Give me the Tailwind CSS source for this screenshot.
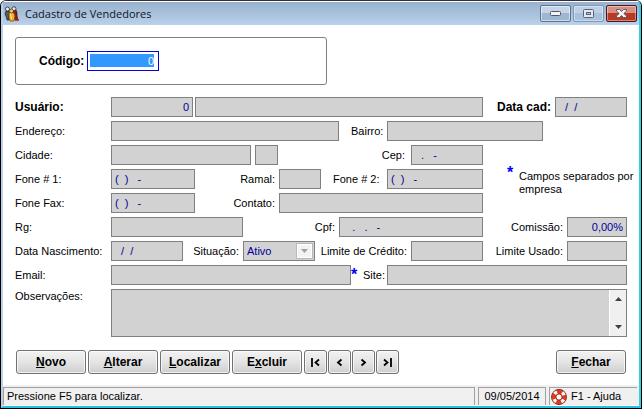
<!DOCTYPE html>
<html lang="pt-BR">
<head>
<meta charset="utf-8">
<title>Cadastro de Vendedores</title>
<script src="https://cdn.jsdelivr.net/npm/@tailwindcss/browser@4"></script>
</head>
<body class="bg-white">
<div class="flex min-h-screen flex-col rounded-t-md border border-t-[#332f38] border-black bg-white font-['Liberation_Sans',Arial,sans-serif] text-[11px] leading-[13px] text-black">
<div class="flex flex-1 flex-col rounded-t-[5px] border-t border-r-2 border-b-2 border-l-2 border-t-white border-r-[#2fd0ee] border-b-[#22c3e6] border-l-[#b9d1ea]">

<header class="flex h-[23px] items-center bg-linear-to-b from-[#98b1ce] to-[#b9d1ea] pl-px">
  <svg class="h-4 w-4 shrink-0" viewBox="0 0 16 16" aria-hidden="true">
    <path d="M2 5h3l1 3-1 2v4H3l-1-4-1-2z" fill="#555a66" stroke="#20222a" stroke-width=".7"/>
    <path d="M9 4h3l1 3v3l1 4h-3z" fill="#8c1d18" stroke="#2a1010" stroke-width=".7"/>
    <path d="M5 7l2-1 3 1 1 3-1 5H6l-1-3z" fill="#f0b020" stroke="#6b4505" stroke-width=".7"/>
    <path d="M6.500 8l1 5" stroke="#fff3a0"/>
    <circle cx="3.500" cy="3" r="2" fill="#f4efe8" stroke="#30261e" stroke-width=".8"/>
    <circle cx="10" cy="2.700" r="2" fill="#ece4da" stroke="#30261e" stroke-width=".8"/>
    <circle cx="7.500" cy="5" r="1.800" fill="#f5d9a0" stroke="#5d3b10" stroke-width=".7"/>
    <path d="M11 14h4" stroke="#bc2a20" stroke-width="1.500"/>
  </svg>
  <h1 class="ml-[5px] flex-1 font-['Open_Sans','Noto_Sans',sans-serif] text-[11px] leading-4 text-[#10151c]">Cadastro de Vendedores</h1>
  <div class="flex gap-0.5 pr-0.5">
    <button type="button" aria-label="Minimizar" class="flex h-[17px] w-[31px] items-center justify-center rounded-[2px] border border-[#5c7290] bg-linear-to-b from-[#c6d5e6] from-50% to-[#9db6d2] to-50% inset-ring inset-ring-white/50">
      <svg class="h-[5px] w-[11px]" viewBox="0 0 11 5"><rect x=".5" y=".5" width="10" height="4" rx="1" fill="#f4f4f4" stroke="#535666"/></svg>
    </button>
    <button type="button" aria-label="Maximizar" class="flex h-[17px] w-[31px] items-center justify-center rounded-[2px] border border-[#8299b6] bg-linear-to-b from-[#bdd0e5] from-50% to-[#a8c1dc] to-50% inset-ring inset-ring-white/40">
      <svg class="h-[9px] w-[11px]" viewBox="0 0 11 9"><rect x=".5" y=".5" width="10" height="8" rx="1" fill="#e4e8ee" stroke="#5b6477"/><rect x="3.500" y="3.500" width="4" height="2" fill="#a8c1dc" stroke="#5b6477"/></svg>
    </button>
    <button type="button" aria-label="Fechar janela" class="flex h-[17px] w-[31px] items-center justify-center rounded-[2px] border border-[#4b1620] bg-linear-to-b from-[#d98e80] from-50% to-[#b93a22] to-50% inset-ring inset-ring-white/40">
      <svg class="h-[9px] w-[11px]" viewBox="0 0 11 9"><path d="M.5.5h3l2 2 2-2h3v1.500l-2.700 2.500 2.700 2.500v1.500h-3l-2-2-2 2h-3V7l2.700-2.500L.5 2z" fill="#f4f4f4" stroke="#535666" stroke-width=".9"/></svg>
    </button>
  </div>
</header>

<main class="flex-1 px-3 pt-3 pb-[11px]">
<form>
  <div class="flex h-12 w-[312px] items-center rounded-[3px] border border-[#808080] pl-[23px]">
    <label for="codigo" class="w-12 text-[12px] font-bold">Código:</label>
    <input id="codigo" value="0" class="h-5 w-[72px] border border-[#0000e0] bg-[#3399ff] bg-clip-content pt-0.5 pr-1 pb-[3px] pl-0.5 text-right text-white outline-none">
  </div>

  <div class="mt-3 flex flex-col gap-1 [&_input]:h-5 [&_input]:min-w-0 [&_input]:border [&_input]:border-[#808080] [&_input]:bg-[#d2d2d2] [&_input]:px-[3px] [&_input]:text-[#000099] [&_label]:shrink-0">
    <div class="flex items-center">
      <label for="usuario" class="w-24 text-[12px] font-bold">Usuário:</label>
      <input id="usuario" value="0" class="w-[82px] text-right">
      <input aria-label="Nome do usuário" class="ml-0.5 flex-1">
      <label for="datacad" class="w-[72px] pr-1 text-right text-[12px] font-bold">Data cad:</label>
      <input id="datacad" value="  /  /" class="w-[72px]">
    </div>
    <div class="flex items-center pr-[84px]">
      <label for="endereco" class="w-24">Endereço:</label>
      <input id="endereco" class="flex-1">
      <label for="bairro" class="w-12 pl-3">Bairro:</label>
      <input id="bairro" class="w-[156px]">
    </div>
    <div class="flex items-center pr-36">
      <label for="cidade" class="w-24">Cidade:</label>
      <input id="cidade" class="w-[140px]">
      <input aria-label="UF" class="ml-1 w-[23px]">
      <label for="cep" class="flex-1 pr-1.5 text-right">Cep:</label>
      <input id="cep" value="  .   -" class="w-[72px]">
    </div>
    <div class="flex">
      <div class="flex flex-1 flex-col gap-1">
        <div class="flex items-center">
          <label for="fone1" class="w-24">Fone # 1:</label>
          <input id="fone1" value="(  )   -" class="w-[84px]">
          <label for="ramal" class="w-[84px] pr-1 text-right">Ramal:</label>
          <input id="ramal" class="w-[42px]">
          <label for="fone2" class="flex-1 pl-3">Fone # 2:</label>
          <input id="fone2" value="(  )   -" class="w-24">
        </div>
        <div class="flex items-center">
          <label for="fax" class="w-24">Fone Fax:</label>
          <input id="fax" value="(  )   -" class="w-[84px]">
          <label for="contato" class="w-[84px] pr-1 text-right">Contato:</label>
          <input id="contato" class="flex-1">
        </div>
      </div>
      <p class="flex w-36 pl-6"><span class="w-3 shrink-0 text-[16px] leading-2 font-bold text-[#0000ff]">*</span><span class="pt-px whitespace-nowrap">Campos separados por<br>empresa</span></p>
    </div>
    <div class="flex items-center">
      <label for="rg" class="w-24">Rg:</label>
      <input id="rg" class="w-[132px]">
      <label for="cpf" class="w-24 pr-1 text-right">Cpf:</label>
      <input id="cpf" value="   .   .   -" class="flex-1">
      <label for="comissao" class="w-[84px] pr-1 text-right">Comissão:</label>
      <input id="comissao" value="0,00%" class="w-[60px] text-right">
    </div>
    <div class="flex items-center">
      <label for="nasc" class="w-24">Data Nascimento:</label>
      <input id="nasc" value="  /  /" class="w-[72px]">
      <label for="situacao" class="w-[60px] pr-1 text-right">Situação:</label>
      <div class="relative w-[72px]">
        <select id="situacao" class="block h-5 w-full appearance-none border border-[#808080] bg-[#d2d2d2] px-[3px] text-[#000099]"><option>Ativo</option></select>
        <span class="pointer-events-none absolute top-0.5 right-0.5 flex h-4 w-[17px] items-center justify-center border border-[#b4b9b9] bg-[#f3f3f3] inset-ring inset-ring-white">
          <svg class="h-1 w-[7px]" viewBox="0 0 7 4"><path d="M0 0h7L3.500 4z" fill="#a0a0a0"/></svg>
        </span>
      </div>
      <label for="credito" class="flex-1 pr-1 text-right whitespace-nowrap">Limite de Crédito:</label>
      <input id="credito" class="w-[72px]">
      <label for="usado" class="w-[84px] pr-1 text-right">Limite Usado:</label>
      <input id="usado" class="w-[60px]">
    </div>
    <div class="flex items-center">
      <label for="email" class="w-24">Email:</label>
      <input id="email" class="flex-1">
      <span class="h-4 w-3 text-[16px] leading-4 font-bold text-[#0000ff]">*</span>
      <label for="site" class="w-6">Site:</label>
      <input id="site" class="flex-1">
    </div>
    <div class="flex">
      <label for="obs" class="w-24 pt-px">Observações:</label>
      <div class="flex h-12 flex-1 border border-[#808080] bg-[#d2d2d2]">
        <textarea id="obs" class="h-full flex-1 resize-none overflow-hidden px-[3px] text-[#000099] outline-none"></textarea>
        <div class="flex w-[17px] flex-col items-center justify-between border-l border-white bg-[#f0f0f0] py-[7px]" aria-hidden="true">
          <svg class="h-1 w-[7px]" viewBox="0 0 7 4"><path d="M0 4h7L3.500 0z" fill="#404040"/></svg>
          <svg class="h-1 w-[7px]" viewBox="0 0 7 4"><path d="M0 0h7L3.500 4z" fill="#404040"/></svg>
        </div>
      </div>
    </div>
  </div>

  <div class="mt-[13px] flex gap-0.5 px-px text-[12px] font-bold [&_button]:flex [&_button]:h-6 [&_button]:items-center [&_button]:justify-center [&_button]:rounded-[3px] [&_button]:border [&_button]:border-[#707070] [&_button]:bg-linear-to-b [&_button]:from-[#f2f2f2] [&_button]:via-[#e4e4e4] [&_button]:to-[#cfcfcf] [&_button]:inset-ring [&_button]:inset-ring-white/70">
    <button type="button" class="w-[70px]"><u>N</u>ovo</button>
    <button type="button" class="w-[70px]"><u>A</u>lterar</button>
    <button type="button" class="w-[70px]"><u>L</u>ocalizar</button>
    <button type="button" class="w-[70px]">E<u>x</u>cluir</button>
    <div class="flex gap-px">
      <button type="button" aria-label="Primeiro" class="w-[23px]"><svg class="h-[9px] w-[9px]" viewBox="0 0 9 9" fill="none" stroke="#000" stroke-width="1.800"><path d="M1 0v9M8 1.500l-3.500 3L8 7.500"/></svg></button>
      <button type="button" aria-label="Anterior" class="w-[23px]"><svg class="h-[9px] w-[9px]" viewBox="0 0 9 9" fill="none" stroke="#000" stroke-width="1.800"><path d="M6.500 1.500L3 4.500l3.500 3"/></svg></button>
      <button type="button" aria-label="Próximo" class="w-[23px]"><svg class="h-[9px] w-[9px]" viewBox="0 0 9 9" fill="none" stroke="#000" stroke-width="1.800"><path d="M2.500 1.500L6 4.500l-3.500 3"/></svg></button>
      <button type="button" aria-label="Último" class="w-[23px]"><svg class="h-[9px] w-[9px]" viewBox="0 0 9 9" fill="none" stroke="#000" stroke-width="1.800"><path d="M8 0v9M1 1.500l3.500 3L1 7.500"/></svg></button>
    </div>
    <button type="button" class="ml-auto w-[70px]"><u>F</u>echar</button>
  </div>
</form>
</main>

<footer class="flex h-[21px] gap-[3px] border-b border-white bg-[#f0f0f0] pt-0.5 pr-0.5 [&>*]:flex [&>*]:items-center [&>*]:border-t [&>*]:border-l [&>*]:border-[#a0a0a0]">
  <span class="flex-1 border-r border-r-white pl-[3px]">Pressione F5 para localizar.</span>
  <time datetime="2014-05-09" class="w-[68px] justify-center border-r border-r-white">09/05/2014</time>
  <span class="w-[88px] gap-1 pl-px">
    <svg class="h-4 w-4" viewBox="0 0 16 16" aria-hidden="true">
      <circle cx="8" cy="8" r="5.300" fill="none" stroke="#6b1a12" stroke-width="5.200"/>
      <circle cx="8" cy="8" r="5.300" fill="none" stroke="#dd3a22" stroke-width="4"/>
      <circle cx="8" cy="8" r="5.300" fill="none" stroke="#fff" stroke-width="3.400" stroke-dasharray="3 5.325" stroke-dashoffset="-2.660"/>
      <circle cx="8" cy="8" r="3" fill="#fff" stroke="#9c2416" stroke-width=".8"/>
    </svg>
    F1 - Ajuda
  </span>
</footer>
</div>
</div>
</body>
</html>
